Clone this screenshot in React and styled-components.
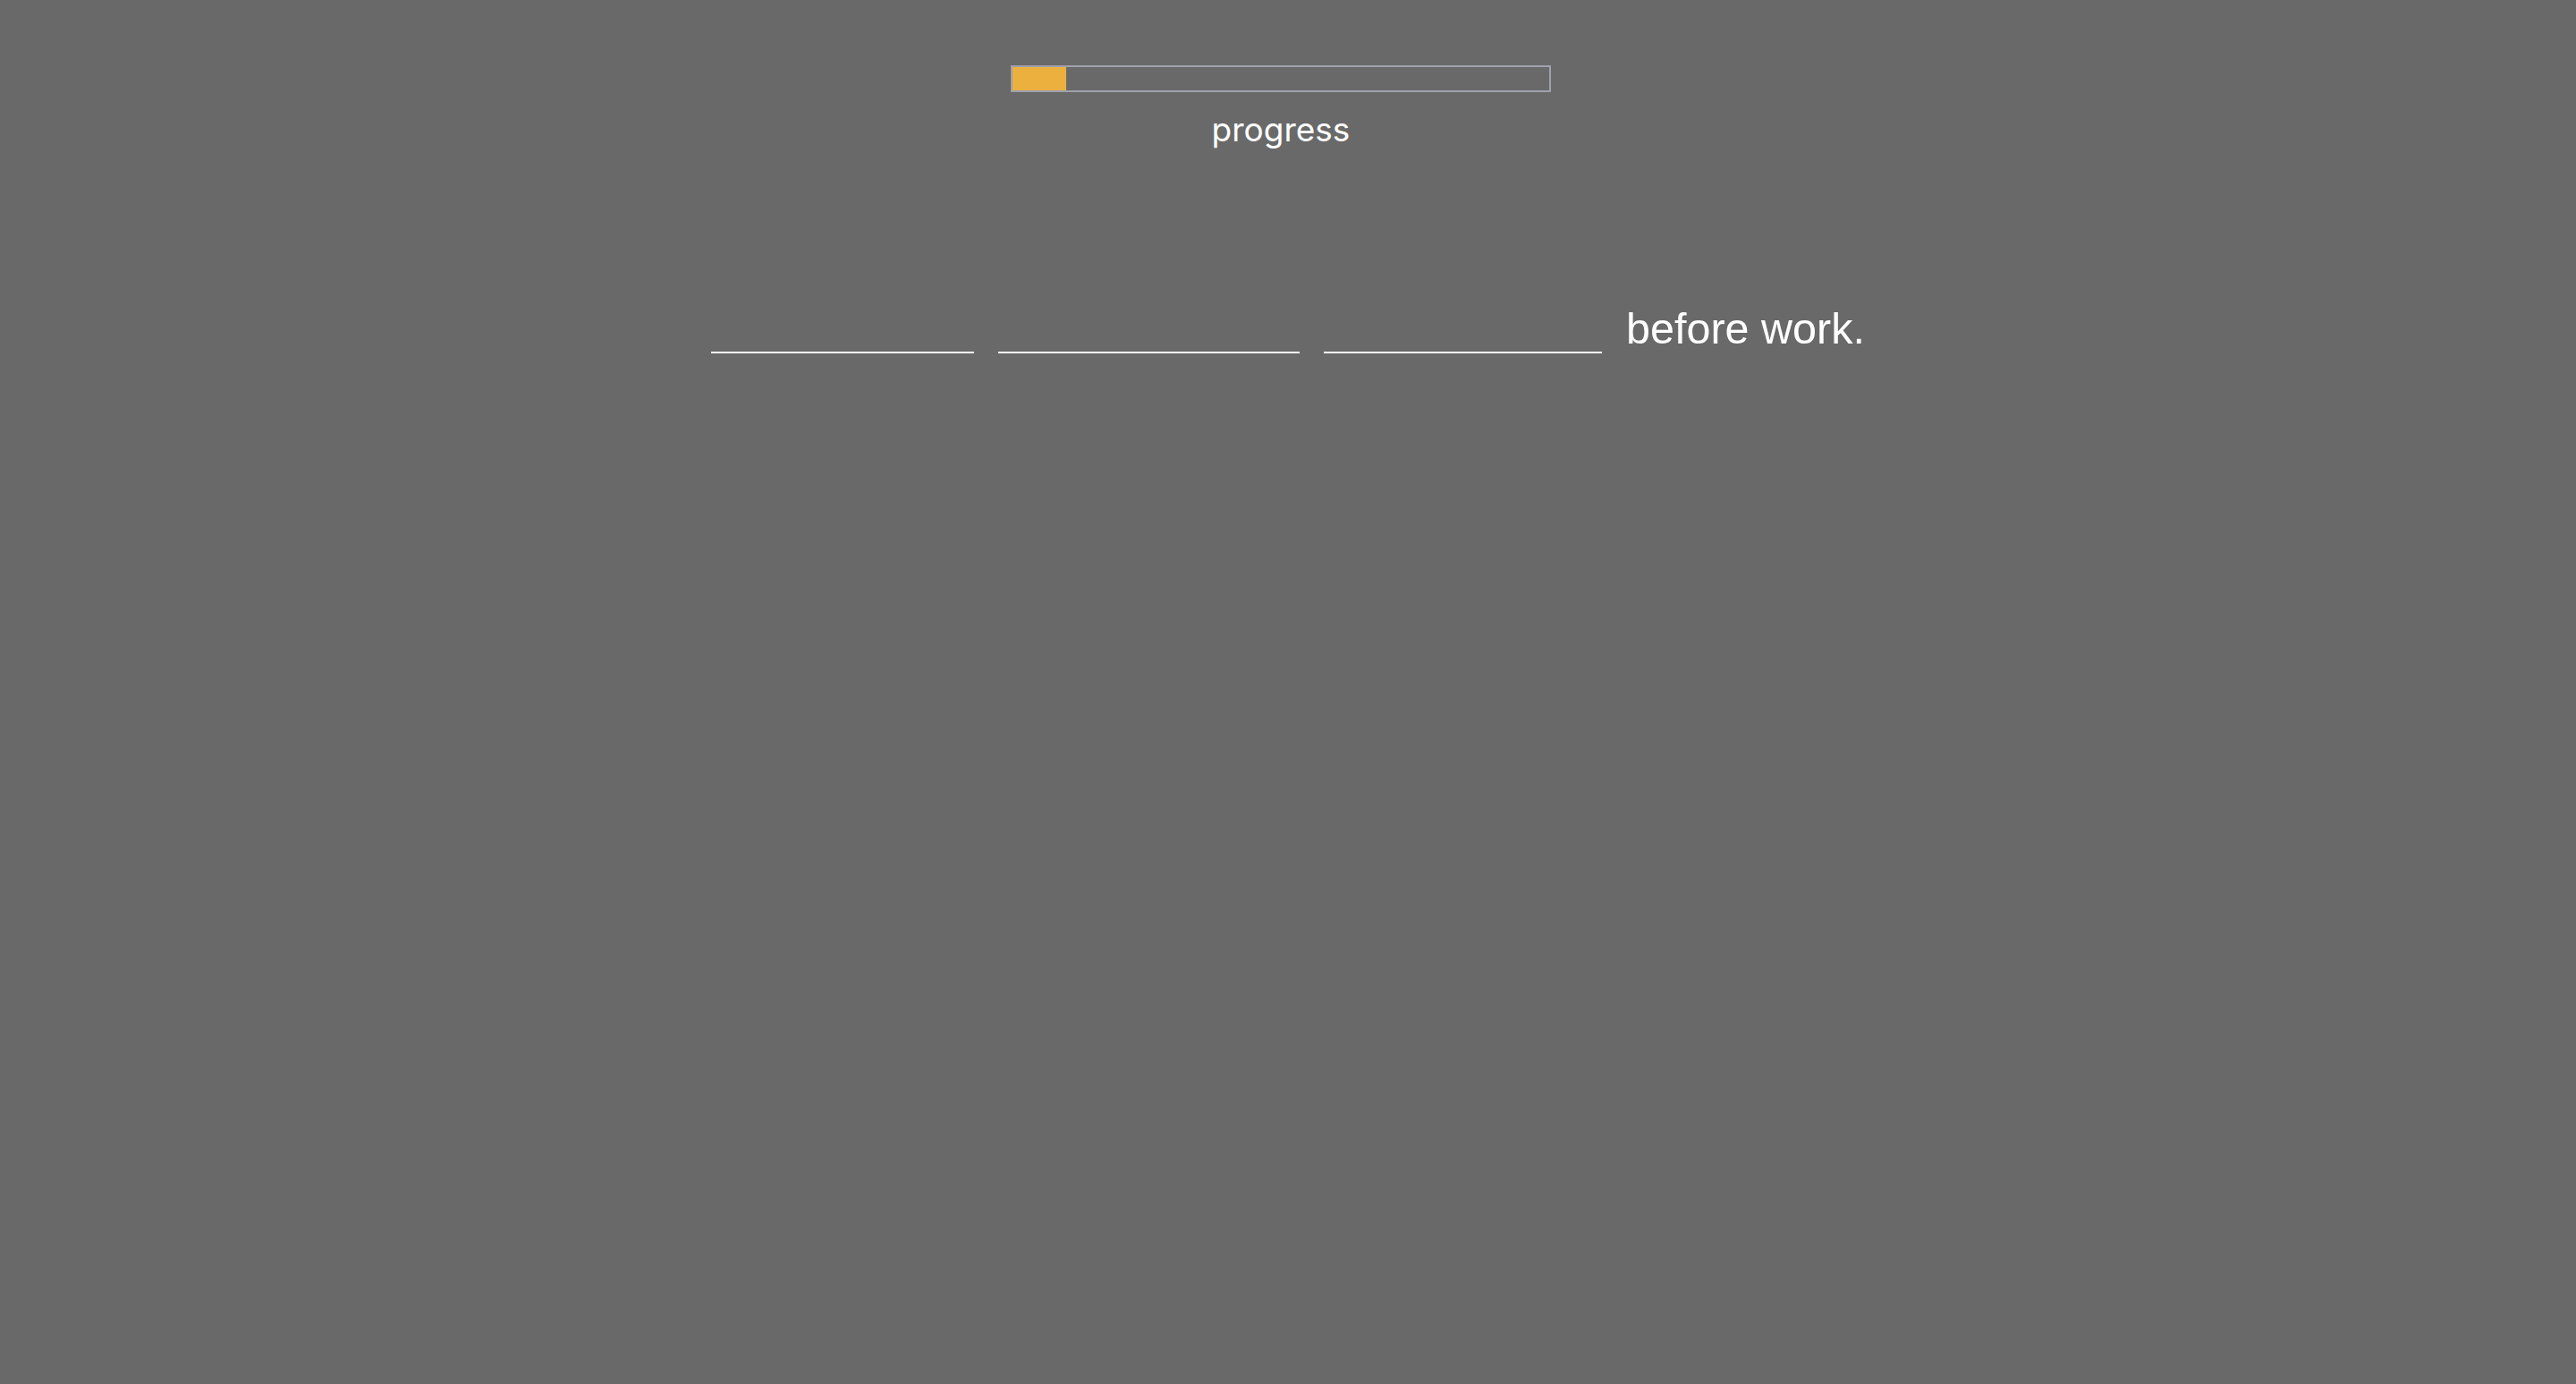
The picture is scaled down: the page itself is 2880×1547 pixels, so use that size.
import React from 'react';
import styled, { createGlobalStyle } from 'styled-components';

const GlobalStyle = createGlobalStyle`
  html, body {
    margin: 0;
    padding: 0;
    background: #696969;
  }
  body {
    min-height: 100vh;
    font-family: "Liberation Sans", Arial, sans-serif;
    color: #fff;
  }
`;

const Page = styled.div`
  display: flex;
  flex-direction: column;
  align-items: center;
  padding-top: 73px;
`;

const ProgressWrap = styled.div`
  display: flex;
  flex-direction: column;
  align-items: center;
  margin-right: 16px;
`;

const Track = styled.div`
  width: 600px;
  height: 26px;
  border: 2px solid #9fa1ad;
  background: transparent;
`;

const Fill = styled.div`
  height: 100%;
  background: #ecb03f;
`;

const Label = styled.div`
  margin-top: 20px;
  font-family: Inter, "Liberation Sans", sans-serif;
  font-size: 37px;
  font-weight: 400;
  line-height: 44px;
  color: #fff;
`;

const Sentence = styled.div`
  display: flex;
  align-items: flex-end;
  justify-content: center;
  gap: 27px;
  margin-top: 173px;
`;

const Blank = styled.input`
  width: ${p => p.$w}px;
  height: 40px;
  padding: 0;
  border: none;
  border-bottom: 2px solid #fff;
  background: transparent;
  color: #fff;
  font-family: "Liberation Sans", Arial, sans-serif;
  font-size: 48px;
  outline: none;
  box-sizing: border-box;
`;

const Words = styled.span`
  font-size: 48.5px;
  line-height: 55px;
  color: #fff;
`;

const blanks = [294, 337, 311];

export default function App() {
  const done = 0.1;
  return (
    <>
      <GlobalStyle />
      <Page>
        <ProgressWrap>
          <Track>
            <Fill style={{ width: `${done * 100}%` }} />
          </Track>
          <Label>progress</Label>
        </ProgressWrap>
        <Sentence>
          {blanks.map((w, i) => (
            <Blank key={i} $w={w} type="text" />
          ))}
          <Words>before work.</Words>
        </Sentence>
      </Page>
    </>
  );
}
